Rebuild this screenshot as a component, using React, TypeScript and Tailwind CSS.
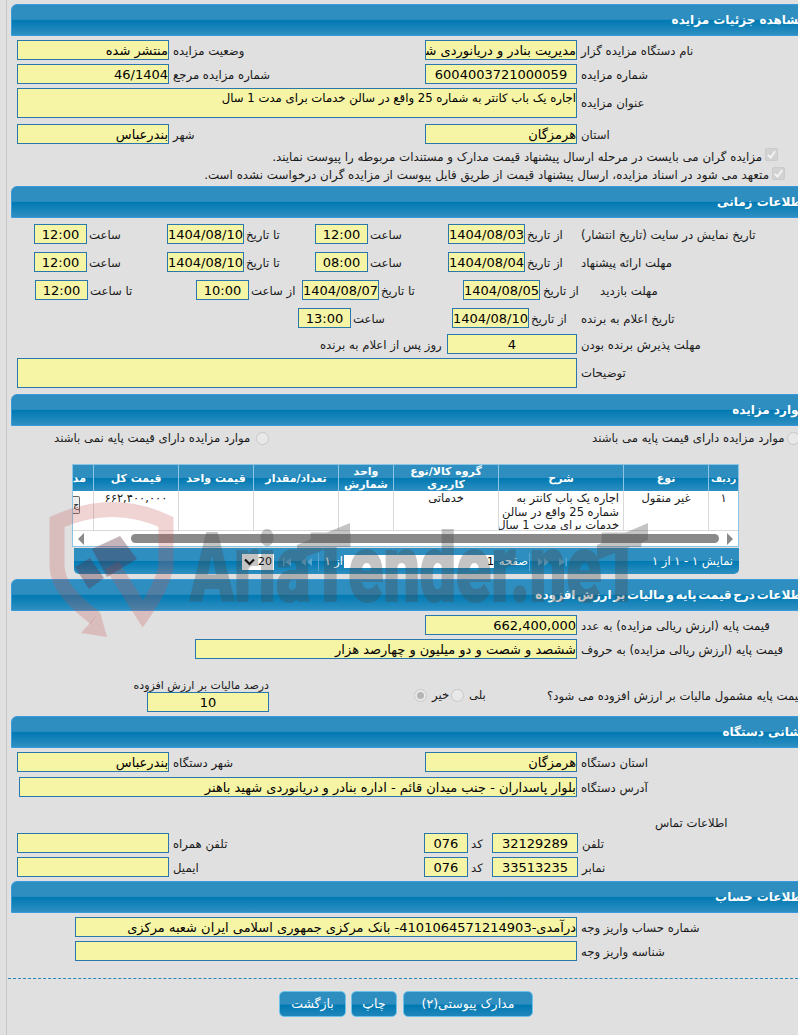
import React from "react";

const Inp = ({ w, h = "h-5", c = "", fs = "text-[13px]", children }: { w: string; h?: string; c?: string; fs?: string; children?: React.ReactNode }) => (
  <div dir="rtl" className={`${w} ${h} ${c} ${fs} shrink-0 border border-[#2a78ab] bg-[#f6f4a5] leading-[19px] text-black whitespace-nowrap overflow-hidden`}>
    {children}
  </div>
);

const Lbl = ({ w = "", c = "", lh = "leading-[22px] max-h-5", fs = "text-[11.7px]", children }: { w?: string; c?: string; lh?: string; fs?: string; children?: React.ReactNode }) => (
  <div dir="rtl" className={`${w} ${c} ${lh} ${fs} shrink-0 text-left text-[#1a1a1a] whitespace-nowrap`}>
    {children}
  </div>
);

const Head = ({ title, c = "" }: { title: string; c?: string }) => (
  <div dir="rtl" className={`ml-[11px] w-[796px] h-8 rounded-tl-[6px] border border-[#3a9bdc] bg-[linear-gradient(to_bottom,#2e8ec0_0%,#2e8ec0_48%,#0079b2_50%,#2e8fc1_100%)] text-white font-bold text-[12px] leading-[30px] whitespace-nowrap overflow-hidden ${c}`}>
    {title}
  </div>
);

const Pair = ({ h = "h-5", mt, a, b, c, d }: { h?: string; mt: string; a: React.ReactNode; b: string; c: React.ReactNode; d: string }) => (
  <div className={`${mt} pl-[17px] grid grid-cols-[152px_256px_152px_1fr]`}>
    <Inp w="w-[152px]" h={h}>{a}</Inp>
    <Lbl c="pl-1">{b}</Lbl>
    <Inp w="w-[152px]" h={h}>{c}</Inp>
    <Lbl c="pl-1">{d}</Lbl>
  </div>
);

const Radio = ({ on = false, c = "" }: { on?: boolean; c?: string }) => (
  <span className={`${c} shrink-0 flex items-center justify-center w-[13px] h-[13px] rounded-full border border-[#c8c8c8] bg-[#e8e8e8]`}>
    {on && <span className="w-[7px] h-[7px] rounded-full bg-[#b5b5b5]" />}
  </span>
);

const Check = ({ c = "" }: { c?: string }) => (
  <span className={`${c} shrink-0 flex items-center justify-center w-[13px] h-[13px] rounded-[2px] bg-[#d2d2d2] border border-[#cbcbcb]`}>
    <svg viewBox="0 0 12 12" className="w-[11px] h-[11px]" fill="none" stroke="#f5f5f5" strokeWidth="2"><path d="M2 6.5 L5 9.5 L10 2.5" /></svg>
  </span>
);

const DateRow = ({ mt, d1, t1, label }: { mt: string; d1: string; t1: string; label: string }) => (
  <div className={`${mt} flex pl-[34px]`}>
    <Inp w="w-[53px]" c="text-center">12:00</Inp>
    <Lbl w="w-[80px]" c="pl-0.5">ساعت</Lbl>
    <Inp w="w-[77px]" c="text-center">1404/08/10</Inp>
    <Lbl w="w-[71px]" c="pl-0.5">تا تاریخ</Lbl>
    <Inp w="w-[53px]" c="text-center">{t1}</Inp>
    <Lbl w="w-[80px]" c="pl-0.5">ساعت</Lbl>
    <Inp w="w-[77px]" c="text-center">{d1}</Inp>
    <Lbl w="w-[56px]" c="pl-0.5">از تاریخ</Lbl>
    <Lbl>{label}</Lbl>
  </div>
);

const cols = "grid-cols-[21px_85px_75px_85px_55px_105px_125px_85px_29px]";
const heads = ["مدارک", "قیمت کل", "قیمت واحد", "تعداد/مقدار", "واحد شمارش", "گروه کالا/نوع کاربری", "شرح", "نوع", "ردیف"];

const Nav = ({ flip = false }: { flip?: boolean }) => (
  <svg width="30" height="10" viewBox="0 0 30 10" fill="#5aa6cf" className={flip ? "-scale-x-100" : ""}>
    <path d="M1 1v8h1.5V1zM3 5l6-4v8z" />
    <path d="M19 5l5-4v8zM25 5l5-4v8z" />
  </svg>
);

const Cell = ({ children }: { children?: React.ReactNode }) => (
  <div dir="rtl" className="border-r border-[#d9d9d9] last:border-r-0 overflow-hidden px-1 pt-px text-center text-[11.5px] leading-[13.5px] text-[#1a1a1a]">
    {children}
  </div>
);

const Btn = ({ w, children }: { w: string; children: React.ReactNode }) => (
  <div dir="rtl" className={`${w} h-[26px] rounded-[5px] border border-[#6cc3e8] bg-[linear-gradient(to_bottom,#2e8ec0_0%,#2e8ec0_50%,#0079b2_55%,#1f86ba_100%)] text-center text-[12.5px] leading-[24px] text-white`}>
    {children}
  </div>
);

export default function App() {
  return (
    <div className="relative w-[798px] h-[1035px] overflow-hidden bg-[#e0e0e0] font-['DejaVu_Sans',sans-serif]">
      <div className="absolute left-[6px] top-0 bottom-0 w-px bg-[#c6c6c6]" />

      <div className="pt-1">
        <Head title="مشاهده جزئیات مزایده" />
        <Pair mt="mt-1" a="منتشر شده" b="وضعیت مزایده" c="مدیریت بنادر و دریانوردی شهید باهنر" d="نام دستگاه مزایده گزار" />
        <Pair mt="mt-1" a="46/1404" b="شماره مزایده مرجع" c={<div className="text-center">6004003721000059</div>} d="شماره مزایده" />
        <div className="mt-1 pl-[17px] flex">
          <Inp w="w-[560px]" h="h-[30px]" fs="text-[11.7px]">اجاره یک باب کانتر به شماره 25 واقع در سالن خدمات برای مدت 1 سال</Inp>
          <Lbl w="w-[200px]" c="pl-1 pt-[5px]" lh="leading-5">عنوان مزایده</Lbl>
        </div>
        <Pair mt="mt-[6px]" a="بندرعباس" b="شهر" c="هرمزگان" d="استان" />
        <div className="mt-[5px] flex h-[17px] items-center justify-end pr-[20px]">
          <div dir="rtl" className="text-[11.8px] text-[#1a1a1a] leading-[17px] whitespace-nowrap">مزایده گران می بایست در مرحله ارسال پیشنهاد قیمت مدارک و مستندات مربوطه را پیوست نمایند.</div>
          <Check c="ml-[3px] mb-[6px]" />
        </div>
        <div className="mt-[1px] flex h-[17px] items-center justify-end pr-[13px]">
          <div dir="rtl" className="text-[11.9px] text-[#1a1a1a] leading-[17px] whitespace-nowrap">متعهد می شود در اسناد مزایده، ارسال پیشنهاد قیمت از طریق فایل پیوست از مزایده گران درخواست نشده است.</div>
          <Check c="ml-[3px] mb-[4px]" />
        </div>
      </div>

      <div className="mt-[2px]">
        <Head title="اطلاعات زمانی" />
        <DateRow mt="mt-[6px]" d1="1404/08/03" t1="12:00" label="تاریخ نمایش در سایت (تاریخ انتشار)" />
        <DateRow mt="mt-2" d1="1404/08/04" t1="08:00" label="مهلت ارائه پیشنهاد" />
        <div className="mt-2 flex pl-[35px]">
          <Inp w="w-[53px]" c="text-center">12:00</Inp>
          <Lbl w="w-[108px]" c="pl-0.5">تا ساعت</Lbl>
          <Inp w="w-[53px]" c="text-center">10:00</Inp>
          <Lbl w="w-[53px]" c="pl-0.5">از ساعت</Lbl>
          <Inp w="w-[77px]" c="text-center">1404/08/07</Inp>
          <Lbl w="w-[84px]" c="pl-0.5">تا تاریخ</Lbl>
          <Inp w="w-[77px]" c="text-center">1404/08/05</Inp>
          <Lbl w="w-[60px]" c="pl-[3px]">از تاریخ</Lbl>
          <Lbl>مهلت بازدید</Lbl>
        </div>
        <div className="mt-2 flex pl-[298px]">
          <Inp w="w-[53px]" c="text-center">13:00</Inp>
          <Lbl w="w-[101px]" c="pl-0.5">ساعت</Lbl>
          <Inp w="w-[77px]" c="text-center">1404/08/10</Inp>
          <Lbl w="w-[52px]" c="pl-0.5">از تاریخ</Lbl>
          <Lbl>تاریخ اعلام به برنده</Lbl>
        </div>
        <div className="mt-[6px] flex pl-[320px]">
          <Lbl w="w-[127px]">روز پس از اعلام به برنده</Lbl>
          <Inp w="w-[130px]" c="text-center">4</Inp>
          <Lbl c="pl-1">مهلت پذیرش برنده بودن</Lbl>
        </div>
        <div className="mt-1 flex pl-[17px]">
          <Inp w="w-[560px]" h="h-[30px]" />
          <Lbl c="pl-1 pt-[5px]" lh="leading-5">توضیحات</Lbl>
        </div>
      </div>

      <div className="mt-[6px]">
        <Head title="موارد مزایده" />
        <div className="mt-1 h-4 flex items-center pl-[54px]">
          <Lbl w="w-[202px]" lh="leading-5">موارد مزایده دارای قیمت پایه نمی باشند</Lbl>
          <Radio />
          <div className="w-[323px] shrink-0" />
          <Lbl w="w-[195px]" lh="leading-5">موارد مزایده دارای قیمت پایه می باشند</Lbl>
          <Radio />
        </div>
        <div className="mt-[18px] ml-[72px] w-[667px] border border-[#8cc4e6] bg-white">
          <div className={`grid ${cols} h-[26px] bg-[linear-gradient(to_bottom,#2e8ec0_0%,#2e8ec0_48%,#0079b2_50%,#2e8fc1_100%)]`}>
            {heads.map((h, i) => (
              <div key={h} dir="rtl" className={`${i === 0 ? "justify-start pr-[7px] whitespace-nowrap" : "justify-center"} ${i === 8 ? "text-[9.5px]" : "text-[11px]"} flex items-center overflow-hidden border-r border-[#8cc4e6] last:border-r-0 text-center leading-[13px] font-bold text-white`}>
                <span>{h}</span>
              </div>
            ))}
          </div>
          <div className={`grid ${cols} h-10 border-b border-[#d9d9d9]`}>
            <div className="border-r border-[#d9d9d9] overflow-hidden pt-[5px]">
              <div className="w-[7px] h-[18px] overflow-hidden rounded-r-[2px] border border-l-0 border-[#666] bg-[#eee] text-right text-[9px] leading-[16px] text-black">ج</div>
            </div>
            <Cell>۶۶۲,۴۰۰,۰۰۰</Cell>
            <Cell />
            <Cell />
            <Cell />
            <Cell>خدماتی</Cell>
            <Cell><div className="text-right whitespace-nowrap">اجاره یک باب کانتر به<br />شماره 25 واقع در سالن<br />خدمات برای مدت 1 سال</div></Cell>
            <Cell>غیر منقول</Cell>
            <Cell>۱</Cell>
          </div>
          <div className="h-[15px] flex items-center px-[5px]">
            <span className="w-0 h-0 border-y-[6px] border-y-transparent border-r-[6px] border-r-[#8a8a8a]" />
            <span className="ml-[47px] w-[589px] h-[9px] rounded-full bg-[#8a8a8a]" />
            <span className="ml-[8px] w-0 h-0 border-y-[6px] border-y-transparent border-l-[6px] border-l-[#8a8a8a]" />
          </div>
        </div>
        <div className="mt-[1px] ml-[74px] w-[665px] h-[26px] rounded-b-[5px] flex items-center pl-[168px] pt-px bg-[linear-gradient(to_bottom,#2e8ec0_0%,#2e8ec0_48%,#0079b2_50%,#2e8fc1_100%)] text-[11.5px] text-white">
          <div className="w-[32px] h-4 shrink-0 bg-white flex items-center justify-between px-0.5 text-black text-[11px] leading-4">
            <svg width="11" height="8" viewBox="0 0 11 8" fill="none" stroke="#000" strokeWidth="2.2"><path d="M1 1.5 L5.5 6 L10 1.5" /></svg>
            <span>20</span>
          </div>
          <div className="ml-2 flex"><Nav /></div>
          <div className="ml-[6px] h-[18px] border-l border-[#5aa6cf]" />
          <div dir="rtl" className="ml-1 w-[20px] whitespace-nowrap">از ۱</div>
          <div dir="rtl" className="w-[150px] ml-[1px] h-[13px] bg-white text-black text-[11px] leading-[13px]">1</div>
          <div dir="rtl" className="ml-1 w-[30px] whitespace-nowrap">صفحه</div>
          <div className="ml-[1px] h-[18px] border-l border-[#5aa6cf]" />
          <div className="ml-2 flex"><Nav flip /></div>
          <div dir="rtl" className="ml-auto mr-[6px] whitespace-nowrap">نمایش ۱ - ۱ از ۱</div>
        </div>
      </div>

      <div className="mt-[5px]">
        <Head title="اطلاعات درج قیمت پایه و مالیات بر ارزش افزوده" c="[word-spacing:-2.5px]" />
        <div className="mt-1 flex pl-[425px]">
          <Inp w="w-[152px]">662,400,000</Inp>
          <Lbl c="pl-1">قیمت پایه (ارزش ریالی مزایده) به عدد</Lbl>
        </div>
        <div className="mt-1 flex pl-[195px]">
          <Inp w="w-[382px]">ششصد و شصت و دو میلیون و چهارصد هزار</Inp>
          <Lbl c="pl-1">قیمت پایه (ارزش ریالی مزایده) به حروف</Lbl>
        </div>
        <div className="mt-5 flex h-[34px] pl-[134px]">
          <div className="w-[135px] flex flex-col items-end">
            <Lbl c="h-[13px]" lh="leading-[13px]" fs="text-[11px]">درصد مالیات بر ارزش افزوده</Lbl>
            <Inp w="w-[122px]" c="text-center">10</Inp>
          </div>
          <div className="ml-[145px] pt-[8px] flex items-start h-[34px]">
            <Radio on c="mt-[2px]" />
            <Lbl w="w-[24px]" c="pl-[5px]" lh="leading-[17px]">خیر</Lbl>
            <Radio c="mt-[2px]" />
            <Lbl w="w-[83px]" c="pl-[5px]" lh="leading-[17px]">بلی</Lbl>
            <Lbl lh="leading-[18px]">قیمت پایه مشمول مالیات بر ارزش افزوده می شود؟</Lbl>
          </div>
        </div>
      </div>

      <div className="mt-[3px]">
        <Head title="نشانی دستگاه" />
        <Pair mt="mt-1" a="بندرعباس" b="شهر دستگاه" c="هرمزگان" d="استان دستگاه" />
        <div className="mt-[5px] flex pl-[19px]">
          <Inp w="w-[558px]">بلوار پاسداران - جنب میدان قائم - اداره بنادر و دریانوردی شهید باهنر</Inp>
          <Lbl c="pl-1">آدرس دستگاه</Lbl>
        </div>
        <Lbl c="mt-4 pl-[655px] h-5" lh="leading-5">اطلاعات تماس</Lbl>
        <div className="flex pl-[17px]">
          <Inp w="w-[152px]" />
          <Lbl w="w-[255px]" c="pl-1">تلفن همراه</Lbl>
          <Inp w="w-[44px]" c="text-center">076</Inp>
          <Lbl w="w-[24px]" c="pl-[3px]">کد</Lbl>
          <Inp w="w-[86px]" c="text-center">32129289</Inp>
          <Lbl c="pl-1">تلفن</Lbl>
        </div>
        <div className="mt-1 flex pl-[17px]">
          <Inp w="w-[152px]" />
          <Lbl w="w-[255px]" c="pl-1">ایمیل</Lbl>
          <Inp w="w-[44px]" c="text-center">076</Inp>
          <Lbl w="w-[24px]" c="pl-[3px]">کد</Lbl>
          <Inp w="w-[86px]" c="text-center">33513235</Inp>
          <Lbl c="pl-1">نمابر</Lbl>
        </div>
      </div>

      <div className="mt-1">
        <Head title="اطلاعات حساب" />
        <div className="mt-1 flex pl-[75px]">
          <Inp w="w-[502px]">درآمدی-4101064571214903- بانک مرکزی جمهوری اسلامی ایران شعبه مرکزی</Inp>
          <Lbl c="pl-1">شماره حساب واریز وجه</Lbl>
        </div>
        <div className="mt-1 flex pl-[75px]">
          <Inp w="w-[502px]" />
          <Lbl c="pl-1">شناسه واریز وجه</Lbl>
        </div>
      </div>

      <div className="mt-[17px] ml-[8px] border-t border-dashed border-[#2a86b8]" />
      <div className="mt-[12px] flex pl-[279px] gap-[5px]">
        <Btn w="w-[67px]">بازگشت</Btn>
        <Btn w="w-[46px]">چاپ</Btn>
        <div className="ml-[1px]"><Btn w="w-[130px]">مدارک پیوستی(۲)</Btn></div>
      </div>

      <svg className="absolute left-0 top-0 pointer-events-none" width="798" height="1035" viewBox="0 0 798 1035">
        <g fill="none" stroke="#c44f4f" strokeOpacity="0.25" strokeWidth="15">
          <path d="M95 618 C72 600 57 585 57 565 L57 522 Q113 497 166 522 L166 568 Q160 590 143 614 L112 565" />
        </g>
        <path d="M100 612 L107 637 L81 633 Z" fill="#c44f4f" fillOpacity="0.25" />
        <g fill="#5a2c3a" fillOpacity="0.35">
          <path d="M75 567 L90 558 L104 578 L89 589 Z" />
          <path d="M92 549 L120 536 L137 559 L107 577 Z" />
        </g>
        <g opacity="0.32">
          <text x="190" y="601" textLength="452" lengthAdjust="spacingAndGlyphs" fontFamily="Roboto, sans-serif" fontWeight="900" fontSize="94" fill="#4a4a4a" stroke="#4a4a4a" strokeWidth="2">AriaTender.neT</text>
          <path d="M297 545 L350 523 L350 540 L297 560 Z" fill="#4a4a4a" />
          <path d="M597 545 L648 523 L648 540 L597 560 Z" fill="#4a4a4a" />
        </g>
      </svg>
    </div>
  );
}
